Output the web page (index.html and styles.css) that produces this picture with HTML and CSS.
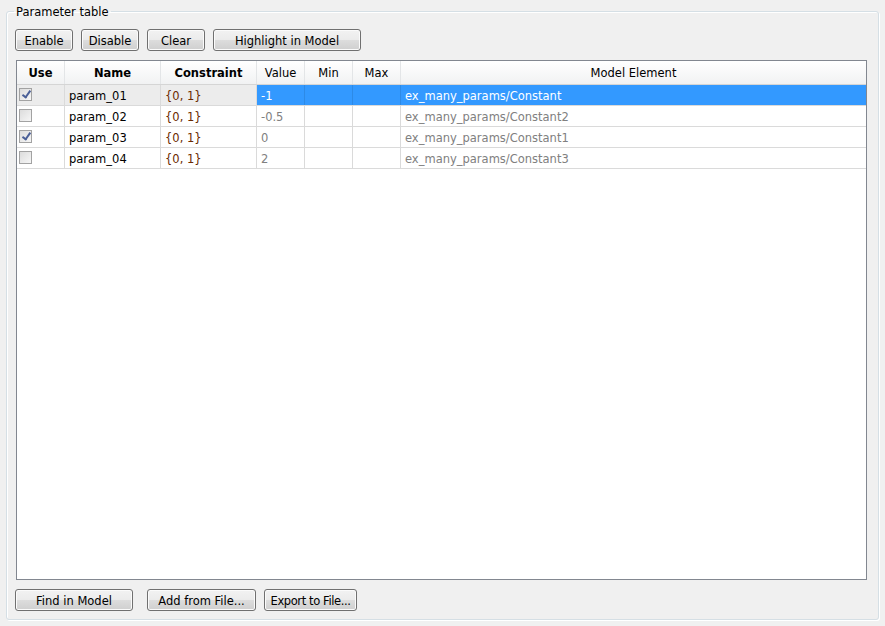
FILE: index.html
```html
<!DOCTYPE html>
<html>
<head>
<meta charset="utf-8">
<link rel="stylesheet" href="styles.css">
</head>
<body>
<fieldset class="group">
  <legend class="legend">Parameter table</legend>
  <div class="toolbar">
    <button class="btn w58">Enable</button>
    <button class="btn w58">Disable</button>
    <button class="btn w58">Clear</button>
    <button class="btn w148">Highlight in Model</button>
  </div>
  <div class="table">
    <div class="row head">
      <div class="c c-use b">Use</div>
      <div class="c c-name b">Name</div>
      <div class="c c-con b">Constraint</div>
      <div class="c c-val">Value</div>
      <div class="c c-min">Min</div>
      <div class="c c-max">Max</div>
      <div class="c c-el">Model Element</div>
    </div>
    <div class="row sel">
      <div class="c c-use"><span class="chk on"></span></div>
      <div class="c c-name">param_01</div>
      <div class="c c-con con">{0, 1}</div>
      <div class="c c-val">-1</div>
      <div class="c c-min"></div>
      <div class="c c-max"></div>
      <div class="c c-el">ex_many_params/Constant</div>
    </div>
    <div class="row">
      <div class="c c-use"><span class="chk"></span></div>
      <div class="c c-name">param_02</div>
      <div class="c c-con con">{0, 1}</div>
      <div class="c c-val dim">-0.5</div>
      <div class="c c-min"></div>
      <div class="c c-max"></div>
      <div class="c c-el dim">ex_many_params/Constant2</div>
    </div>
    <div class="row">
      <div class="c c-use"><span class="chk on"></span></div>
      <div class="c c-name">param_03</div>
      <div class="c c-con con">{0, 1}</div>
      <div class="c c-val dim">0</div>
      <div class="c c-min"></div>
      <div class="c c-max"></div>
      <div class="c c-el dim">ex_many_params/Constant1</div>
    </div>
    <div class="row">
      <div class="c c-use"><span class="chk"></span></div>
      <div class="c c-name">param_04</div>
      <div class="c c-con con">{0, 1}</div>
      <div class="c c-val dim">2</div>
      <div class="c c-min"></div>
      <div class="c c-max"></div>
      <div class="c c-el dim">ex_many_params/Constant3</div>
    </div>
  </div>
  <div class="toolbar bottom">
    <button class="btn w118">Find in Model</button>
    <button class="btn w109 gap14">Add from File...</button>
    <button class="btn w92">Export to File...</button>
  </div>
</fieldset>
</body>
</html>
```
FILE: styles.css
```css
html, body {
  margin: 0;
  padding: 0;
  background: #f0f0f0;
  width: 885px;
  height: 626px;
  overflow: hidden;
  font-family: "DejaVu Sans", Verdana, sans-serif;
  font-size: 11.5px;
  color: #000;
}
.group {
  box-sizing: border-box;
  margin: 4px 0 0 6px;
  width: 873px;
  height: 616px;
  border: 1px solid #d5dfe5;
  border-radius: 3px;
  box-shadow: 1px 1px 0 #ffffff, inset 1px 1px 0 #ffffff;
  padding: 0 0 0 8px;
  display: flex;
  flex-direction: column;
}
.legend {
  padding: 2px 2px 0 2px;
  margin-left: -1px;
  font-size: 11.5px;
  line-height: 13px;
}
.toolbar {
  display: flex;
  gap: 8px;
  margin-top: 10px;
}
.toolbar.bottom {
  margin-top: 9px;
}
.btn {
  box-sizing: border-box;
  height: 22px;
  border: 1px solid #707070;
  border-radius: 3px;
  background: linear-gradient(#f2f2f2 0%, #ebebeb 50%, #dddddd 51%, #cfcfcf 100%);
  box-shadow: inset 0 0 0 1px #fbfbfb;
  font-family: "DejaVu Sans", Verdana, sans-serif;
  font-size: 11.5px;
  padding: 1px 0 0 0;
  color: #000;
  white-space: nowrap;
}
.w58 { width: 58px; }
.w148 { width: 148px; }
.w118 { width: 118px; }
.w109 { width: 109px; }
.w92 { width: 93px; letter-spacing: -0.4px; }
.gap14 { margin-left: 6px; }
.table {
  box-sizing: border-box;
  width: 851px;
  height: 520px;
  margin-left: 1px;
  margin-top: 9px;
  border: 1px solid #828790;
  background: #ffffff;
}
.row {
  display: flex;
  height: 21px;
  box-sizing: border-box;
  border-bottom: 1px solid #dadada;
}
.row.head {
  height: 24px;
  background: linear-gradient(#ffffff, #f1f2f3);
  border-bottom: 1px solid #d5d5d5;
}
.c {
  box-sizing: border-box;
  border-right: 1px solid #dadada;
  padding: 2px 4px 0 4px;
  line-height: 18px;
  white-space: nowrap;
  overflow: hidden;
}
.head .c {
  padding-top: 1px;
  line-height: 22px;
  text-align: center;
  border-right: 1px solid #e3e5e7;
}
.b { font-weight: bold; }
.c-use { width: 48px; }
.c-name { width: 96px; }
.c-con { width: 96px; }
.c-val { width: 48px; }
.c-min { width: 48px; }
.c-max { width: 48px; }
.c-el { flex: 1; border-right: none; }
.head .c-el { border-right: none; }
.con { color: #6b2a00; }
.dim { color: #808080; }
.sel .c-use, .sel .c-name, .sel .c-con { background: #ececec; }
.sel .c-val, .sel .c-min, .sel .c-max, .sel .c-el {
  background: #3399ff;
  color: #ffffff;
  border-right-color: #2d8ae6;
}
.c-use { padding: 0 0 0 2px; }
.head .c-use { padding: 1px 0 0 0; }
.chk {
  display: inline-block;
  box-sizing: border-box;
  width: 13px;
  height: 13px;
  margin-top: 3px;
  border: 1px solid #a2a2a2;
  background: linear-gradient(135deg, #dcdcdc, #f6f6f6);
  vertical-align: top;
  position: relative;
}
.chk.on::after {
  content: "";
  position: absolute;
  left: 4px;
  top: 0px;
  width: 3px;
  height: 7px;
  border-right: 2px solid #4a5f97;
  border-bottom: 2px solid #4a5f97;
  transform: rotate(35deg);
}
```
